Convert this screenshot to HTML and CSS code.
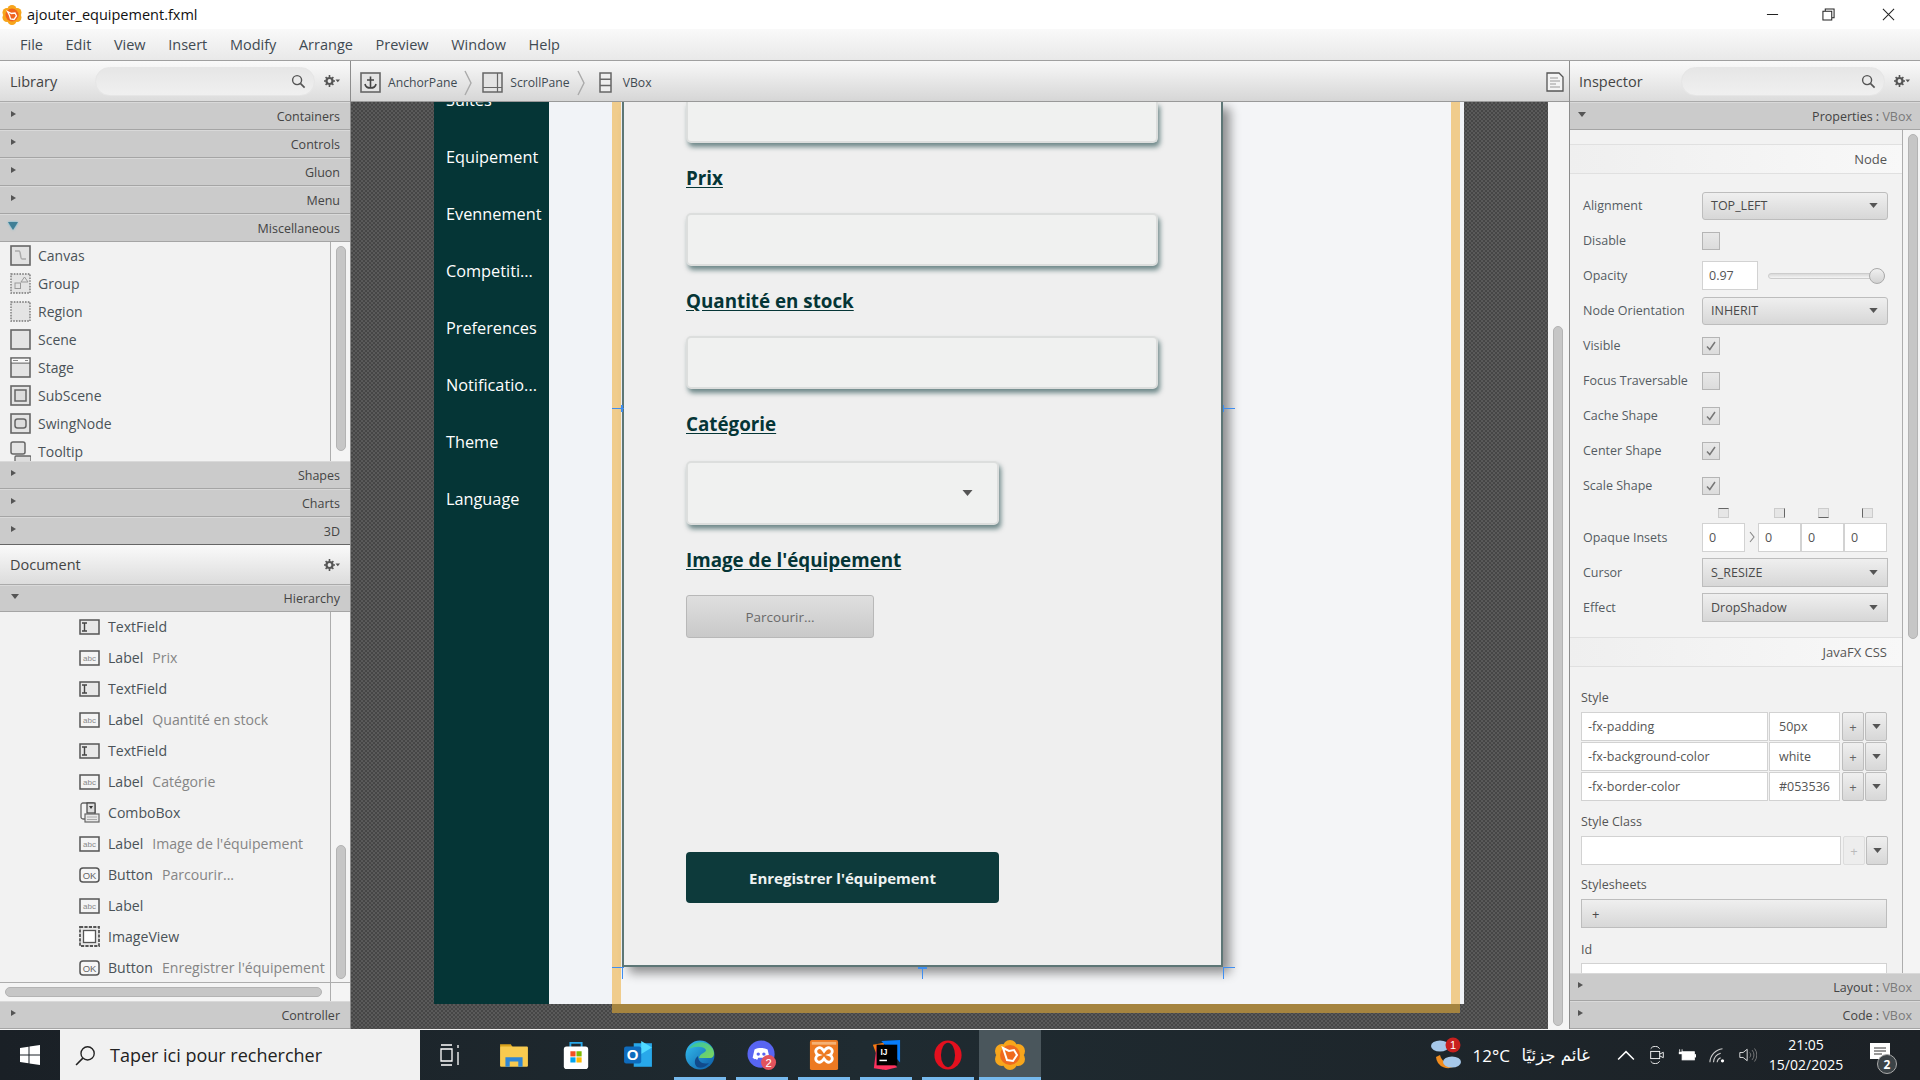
FILE: index.html
```html
<!DOCTYPE html>
<html lang="fr">
<head>
<meta charset="utf-8">
<title>ajouter_equipement.fxml</title>
<link rel="stylesheet" href="styles.css">
</head>
<body>
<svg class="sprite" aria-hidden="true">
  <symbol id="search" viewBox="0 0 16 16"><circle cx="6.5" cy="6.5" r="4.8" fill="none" stroke="#555" stroke-width="1.5"/><path d="M10 10l4.5 4.5" stroke="#555" stroke-width="1.8"/></symbol>
  <symbol id="gear" viewBox="0 0 16 12"><circle cx="5.5" cy="6" r="3" fill="none" stroke="#555" stroke-width="2.2"/><path d="M5.5 0v2M5.5 10v2M0 6h2M9 6h2M1.6 2.1l1.4 1.4M8 8.5l1.4 1.4M9.4 2.1L8 3.5M3 8.5L1.6 9.9" stroke="#555" stroke-width="1.6"/><path d="M11.5 4.5h4.5l-2.2 2.8z" fill="#555"/></symbol>
  <symbol id="i-canvas" viewBox="0 0 21 21"><rect x="1" y="1" width="19" height="19" fill="#e2e2e2" stroke="#666" stroke-width="1.6"/><path d="M5 6h4c2 0 1 8 3 8h4" fill="none" stroke="#aaa" stroke-width="1.5"/></symbol>
  <symbol id="i-group" viewBox="0 0 21 21"><rect x="1" y="1" width="19" height="19" fill="#e4e4e4" stroke="#777" stroke-width="1.4" stroke-dasharray="1.6 1.2"/><rect x="5" y="10" width="5.5" height="5.5" fill="none" stroke="#999"/><path d="M11 9l3.5-5 3.500 5z" fill="none" stroke="#999"/></symbol>
  <symbol id="i-region" viewBox="0 0 21 21"><rect x="1" y="1" width="19" height="19" fill="#e4e4e4" stroke="#777" stroke-width="1.4" stroke-dasharray="1.600 1.200"/></symbol>
  <symbol id="i-scene" viewBox="0 0 21 21"><rect x="1" y="1" width="19" height="19" fill="#e4e4e4" stroke="#666" stroke-width="1.6"/></symbol>
  <symbol id="i-anchor" viewBox="0 0 21 21"><rect x="1" y="1" width="19" height="19" fill="#e4e4e4" stroke="#666" stroke-width="1.6"/><path d="M10.500 4.500v11.500M7 8h7M5 12c.5 3 3 4 5.500 4s5-1 5.500-4" fill="none" stroke="#444" stroke-width="1.600"/></symbol>
  <symbol id="i-stage" viewBox="0 0 21 21"><rect x="1" y="1" width="19" height="19" fill="#e4e4e4" stroke="#666" stroke-width="1.6"/><path d="M1 6h19" stroke="#666" stroke-width="1.300"/><rect x="1.800" y="1.800" width="17.400" height="3.600" fill="#fafafa"/><path d="M3 3.500h5M15 3.500h3" stroke="#888"/></symbol>
  <symbol id="i-subscene" viewBox="0 0 21 21"><rect x="1" y="1" width="19" height="19" fill="#e4e4e4" stroke="#666" stroke-width="1.6"/><rect x="5" y="5" width="11" height="11" fill="#ddd" stroke="#666" stroke-width="1.500"/></symbol>
  <symbol id="i-swing" viewBox="0 0 21 21"><rect x="1" y="1" width="19" height="19" fill="#e4e4e4" stroke="#666" stroke-width="1.6"/><rect x="5" y="6" width="11" height="9" rx="2.500" fill="#ddd" stroke="#666" stroke-width="1.500"/></symbol>
  <symbol id="i-tooltip" viewBox="0 0 21 21"><rect x="1" y="1" width="14" height="12" rx="2" fill="#e4e4e4" stroke="#666" stroke-width="1.500"/><rect x="5" y="15" width="16" height="8" rx="1" fill="#ddd" stroke="#666" stroke-width="1.300"/></symbol>
  <symbol id="i-text" viewBox="0 0 21 16"><rect x="1" y="1" width="19" height="14" fill="#e8e8e8" stroke="#555" stroke-width="1.500"/><path d="M3 4h5M3 12h5M5.500 4v8" stroke="#444" stroke-width="1.400"/></symbol>
  <symbol id="i-combo" viewBox="0 0 21 21"><rect x="2" y="1" width="14" height="16" rx="2" fill="#f4f4f4" stroke="#666" stroke-width="1.300"/><rect x="8" y="1" width="8" height="10" fill="#ddd" stroke="#444" stroke-width="1.200"/><path d="M10 4h4l-2 3z" fill="#333"/><rect x="6" y="12" width="14" height="8" fill="#e8e8e8" stroke="#666" stroke-width="1.200"/><path d="M8 15h10M8 17.500h10" stroke="#aaa"/></symbol>
  <symbol id="i-image" viewBox="0 0 21 21"><rect x="1" y="1" width="19" height="19" fill="#e8e8e8" stroke="#555" stroke-width="1.800" stroke-dasharray="3.200 1.200"/><rect x="4.500" y="4.500" width="12" height="12" fill="#fff" stroke="#555" stroke-width="1.300"/></symbol>
  <symbol id="caret" viewBox="0 0 10 6"><path d="M0 0h10L5 6z" fill="#555"/></symbol>
  <symbol id="check" viewBox="0 0 12 12"><path d="M2 6.500l2.800 3L10 2" fill="none" stroke="#777" stroke-width="1.500"/></symbol>
</svg>

<header class="titlebar">
  <svg class="app-logo" viewBox="0 0 20 20"><g fill="#f7a51c"><circle cx="10" cy="4.500" r="4.500"/><circle cx="10" cy="15.500" r="4.500"/><circle cx="5" cy="7.500" r="4.500"/><circle cx="15" cy="7.500" r="4.500"/><circle cx="5" cy="12.500" r="4.500"/><circle cx="15" cy="12.500" r="4.500"/></g><circle cx="10" cy="10" r="6.500" fill="#f0631f"/><path d="M5.500 6.500l4 2 3.500-.5 1.500 3-2.500 3.500-3.500-.5-1-3.500z" fill="none" stroke="#fff" stroke-width="1.300"/></svg>
  <span class="title-text">ajouter_equipement.fxml</span>
  <div class="win-controls">
    <svg viewBox="0 0 14 14"><path d="M1 7h12" stroke="#222" stroke-width="1.100"/></svg>
    <svg class="win-restore" viewBox="0 0 14 14"><path d="M3.500 3.500V1h9.500v9.500h-2.500M1 3.500h9.500V13H1z" fill="none" stroke="#222" stroke-width="1.100"/></svg>
    <svg viewBox="0 0 14 14"><path d="M1 1l12 12M13 1L1 13" stroke="#222" stroke-width="1.100"/></svg>
  </div>
</header>

<nav class="menubar">
  <span>File</span><span>Edit</span><span>View</span><span>Insert</span><span>Modify</span><span>Arrange</span><span>Preview</span><span>Window</span><span>Help</span>
</nav>

<div class="workarea">
  <aside class="left-panel">
    <div class="panel-head">
      <span class="panel-title">Library</span>
      <div class="searchbox lib-search"><svg class="search-ic"><use href="#search"/></svg></div>
      <svg class="gear"><use href="#gear"/></svg>
    </div>
    <div class="sec"><i class="tri"></i><span>Containers</span></div>
    <div class="sec"><i class="tri"></i><span>Controls</span></div>
    <div class="sec"><i class="tri"></i><span>Gluon</span></div>
    <div class="sec"><i class="tri"></i><span>Menu</span></div>
    <div class="sec"><i class="tri-down blue"></i><span>Miscellaneous</span></div>
    <div class="lib-list">
      <ul class="lib-items">
        <li><svg class="ic21"><use href="#i-canvas"/></svg>Canvas</li>
        <li><svg class="ic21"><use href="#i-group"/></svg>Group</li>
        <li><svg class="ic21"><use href="#i-region"/></svg>Region</li>
        <li><svg class="ic21"><use href="#i-scene"/></svg>Scene</li>
        <li><svg class="ic21"><use href="#i-stage"/></svg>Stage</li>
        <li><svg class="ic21"><use href="#i-subscene"/></svg>SubScene</li>
        <li><svg class="ic21"><use href="#i-swing"/></svg>SwingNode</li>
        <li><svg class="ic21"><use href="#i-tooltip"/></svg>Tooltip</li>
      </ul>
      <div class="vscroll"><div class="thumb lib-thumb"></div></div>
    </div>
    <div class="sec"><i class="tri"></i><span>Shapes</span></div>
    <div class="sec"><i class="tri"></i><span>Charts</span></div>
    <div class="sec sec-dark"><i class="tri"></i><span>3D</span></div>
    <div class="panel-head doc-head">
      <span class="panel-title">Document</span>
      <svg class="gear"><use href="#gear"/></svg>
    </div>
    <div class="sec sec-hier"><i class="tri-down"></i><span>Hierarchy</span></div>
    <div class="hier">
      <ul class="hier-items">
        <li><svg class="ic-h"><use href="#i-text"/></svg>TextField</li>
        <li><svg class="ic-h" viewBox="0 0 21 16"><rect x="1" y="1" width="19" height="14" fill="#f4f4f4" stroke="#555" stroke-width="1.500"/><text x="10.500" y="11" font-size="8" font-family="Liberation Sans" fill="#888" text-anchor="middle">abc</text></svg>Label<em>Prix</em></li>
        <li><svg class="ic-h"><use href="#i-text"/></svg>TextField</li>
        <li><svg class="ic-h" viewBox="0 0 21 16"><rect x="1" y="1" width="19" height="14" fill="#f4f4f4" stroke="#555" stroke-width="1.500"/><text x="10.500" y="11" font-size="8" font-family="Liberation Sans" fill="#888" text-anchor="middle">abc</text></svg>Label<em>Quantité en stock</em></li>
        <li><svg class="ic-h"><use href="#i-text"/></svg>TextField</li>
        <li><svg class="ic-h" viewBox="0 0 21 16"><rect x="1" y="1" width="19" height="14" fill="#f4f4f4" stroke="#555" stroke-width="1.500"/><text x="10.500" y="11" font-size="8" font-family="Liberation Sans" fill="#888" text-anchor="middle">abc</text></svg>Label<em>Catégorie</em></li>
        <li><svg class="ic-h tall"><use href="#i-combo"/></svg>ComboBox</li>
        <li><svg class="ic-h" viewBox="0 0 21 16"><rect x="1" y="1" width="19" height="14" fill="#f4f4f4" stroke="#555" stroke-width="1.500"/><text x="10.500" y="11" font-size="8" font-family="Liberation Sans" fill="#888" text-anchor="middle">abc</text></svg>Label<em>Image de l'équipement</em></li>
        <li><svg class="ic-h" viewBox="0 0 21 16"><rect x="1" y="1" width="19" height="14" rx="3" fill="#f6f6f6" stroke="#555" stroke-width="1.500"/><text x="10.500" y="11.500" font-size="9.500" font-family="Liberation Sans" fill="#666" text-anchor="middle">OK</text></svg>Button<em>Parcourir...</em></li>
        <li><svg class="ic-h" viewBox="0 0 21 16"><rect x="1" y="1" width="19" height="14" fill="#f4f4f4" stroke="#555" stroke-width="1.500"/><text x="10.500" y="11" font-size="8" font-family="Liberation Sans" fill="#888" text-anchor="middle">abc</text></svg>Label</li>
        <li><svg class="ic-h tall"><use href="#i-image"/></svg>ImageView</li>
        <li><svg class="ic-h" viewBox="0 0 21 16"><rect x="1" y="1" width="19" height="14" rx="3" fill="#f6f6f6" stroke="#555" stroke-width="1.500"/><text x="10.500" y="11.500" font-size="9.500" font-family="Liberation Sans" fill="#666" text-anchor="middle">OK</text></svg>Button<em>Enregistrer l'équipement</em></li>
      </ul>
      <div class="vscroll"><div class="thumb hier-thumb"></div></div>
    </div>
    <div class="hscroll"><div class="hthumb"></div><div class="hcorner"></div></div>
    <div class="sec"><i class="tri"></i><span>Controller</span></div>
  </aside>

  <main class="center">
    <div class="crumbs">
      <svg class="ic21"><use href="#i-anchor"/></svg>
      <span class="crumb-text">AnchorPane</span>
      <svg class="chev" viewBox="0 0 8 26"><path d="M1 1l6 12-6 12" fill="none" stroke="#aaa" stroke-width="1.400"/></svg>
      <svg class="ic21" viewBox="0 0 21 21"><rect x="1" y="1" width="19" height="19" fill="#e4e4e4" stroke="#666" stroke-width="1.500"/><path d="M15.500 1v19M1 15.500h19" stroke="#666" stroke-width="1.200"/></svg>
      <span class="crumb-text">ScrollPane</span>
      <svg class="chev" viewBox="0 0 8 26"><path d="M1 1l6 12-6 12" fill="none" stroke="#aaa" stroke-width="1.400"/></svg>
      <svg class="vbox-ic" viewBox="0 0 13 21"><rect x="1" y="1" width="11" height="19" fill="#eee" stroke="#666" stroke-width="1.500"/><path d="M1 7.300h11M1 13.600h11" stroke="#666" stroke-width="1.500"/></svg>
      <span class="crumb-text">VBox</span>
      <svg class="doc-ic" viewBox="0 0 18 20"><path d="M1 1h12l4 4v14H1z" fill="#f4f4f4" stroke="#555" stroke-width="1.300"/><path d="M4 6h8M4 9h10M4 12h6M4 15h10" stroke="#999" stroke-width="1.200"/></svg>
    </div>
    <div class="stage-wrap">
      <div class="canvas">
        <div class="scene-row">
          <div class="sidebar">
            <span class="side-first">Suites</span>
            <span>Equipement</span>
            <span>Evennement</span>
            <span>Competiti...</span>
            <span>Preferences</span>
            <span>Notificatio...</span>
            <span>Theme</span>
            <span>Language</span>
          </div>
          <div class="scene-main">
            <div class="beige">
              <div class="beige-inner">
                <section class="card">
                  <div class="field field-top"></div>
                  <h3 class="flabel">Prix</h3>
                  <div class="field"></div>
                  <h3 class="flabel">Quantité en stock</h3>
                  <div class="field"></div>
                  <h3 class="flabel flabel-combo">Catégorie</h3>
                  <div class="combo"><svg class="combo-caret"><use href="#caret"/></svg></div>
                  <h3 class="flabel">Image de l'équipement</h3>
                  <div class="browse">Parcourir...</div>
                  <div class="save">Enregistrer l'équipement</div>
                  <i class="hd hd-l"></i><i class="hd hd-r"></i><i class="hd hd-b"></i><i class="hd hd-bl"></i><i class="hd hd-br"></i>
                </section>
              </div>
              <div class="beige-foot"></div>
            </div>
          </div>
        </div>
      </div>
      <div class="center-scroll"><div class="thumb center-thumb"></div></div>
    </div>
  </main>

  <aside class="right-panel">
    <div class="panel-head insp-head">
      <span class="panel-title">Inspector</span>
      <div class="searchbox ins-search"><svg class="search-ic"><use href="#search"/></svg></div>
      <svg class="gear"><use href="#gear"/></svg>
    </div>
    <div class="sec sec-r"><i class="tri-down"></i><span>Properties : <b>VBox</b></span></div>
    <div class="insp-body">
      <div class="insp-content">
        <div class="subhead first">Node</div>
        <div class="row"><label>Alignment</label><div class="ctl drop">TOP_LEFT<svg class="dcaret"><use href="#caret"/></svg></div></div>
        <div class="row"><label>Disable</label><div class="cb"></div></div>
        <div class="row"><label>Opacity</label><div class="inp op-inp">0.97</div><div class="slider"><i></i></div></div>
        <div class="row"><label>Node Orientation</label><div class="ctl drop">INHERIT<svg class="dcaret"><use href="#caret"/></svg></div></div>
        <div class="row"><label>Visible</label><div class="cb"><svg><use href="#check"/></svg></div></div>
        <div class="row"><label>Focus Traversable</label><div class="cb"></div></div>
        <div class="row"><label>Cache Shape</label><div class="cb"><svg><use href="#check"/></svg></div></div>
        <div class="row"><label>Center Shape</label><div class="cb"><svg><use href="#check"/></svg></div></div>
        <div class="row"><label>Scale Shape</label><div class="cb"><svg><use href="#check"/></svg></div></div>
        <div class="inset-icons">
          <i class="ii ii-t"></i><i class="ii ii-r"></i><i class="ii ii-b"></i><i class="ii ii-l"></i>
        </div>
        <div class="row row-insets"><label>Opaque Insets</label>
          <div class="inp in-a">0</div>
          <svg class="in-chev" viewBox="0 0 6 12"><path d="M1 1l4 5-4 5" fill="none" stroke="#888" stroke-width="1.100"/></svg>
          <div class="inp in-b">0</div><div class="inp in-b">0</div><div class="inp in-b">0</div>
        </div>
        <div class="row"><label>Cursor</label><div class="ctl drop tall-ctl">S_RESIZE<svg class="dcaret"><use href="#caret"/></svg></div></div>
        <div class="row"><label>Effect</label><div class="ctl drop tall-ctl">DropShadow<svg class="dcaret"><use href="#caret"/></svg></div></div>
        <div class="subhead css">JavaFX CSS</div>
        <div class="stack-label style-lab">Style</div>
        <div class="style-row"><div class="inp st-k">-fx-padding</div><div class="inp st-v">50px</div><div class="ctl mini">+</div><div class="ctl mini"><svg class="mcaret"><use href="#caret"/></svg></div></div>
        <div class="style-row"><div class="inp st-k">-fx-background-color</div><div class="inp st-v">white</div><div class="ctl mini">+</div><div class="ctl mini"><svg class="mcaret"><use href="#caret"/></svg></div></div>
        <div class="style-row"><div class="inp st-k">-fx-border-color</div><div class="inp st-v">#053536</div><div class="ctl mini">+</div><div class="ctl mini"><svg class="mcaret"><use href="#caret"/></svg></div></div>
        <div class="stack-label">Style Class</div>
        <div class="style-row"><div class="inp st-wide"></div><div class="ctl mini off">+</div><div class="ctl mini"><svg class="mcaret"><use href="#caret"/></svg></div></div>
        <div class="stack-label lab-sheets">Stylesheets</div>
        <div class="ctl sheet">+</div>
        <div class="stack-label lab-id">Id</div>
        <div class="inp id-inp"></div>
      </div>
      <div class="vscroll insp-scroll"><div class="thumb insp-thumb"></div></div>
    </div>
    <div class="sec sec-r"><i class="tri"></i><span>Layout : <b>VBox</b></span></div>
    <div class="sec sec-r"><i class="tri"></i><span>Code : <b>VBox</b></span></div>
  </aside>
</div>

<footer class="taskbar">
  <div class="start"><svg viewBox="0 0 20 20"><path d="M0 3l8.500-1.200v7.700H0zM9.500 1.600L20 0v9.500H9.500zM0 10.500h8.500v7.700L0 17zM9.500 10.500H20V20L9.500 18.400z" fill="#fff"/></svg></div>
  <div class="task-search">
    <svg viewBox="0 0 20 20"><circle cx="12" cy="8" r="6.300" fill="none" stroke="#222" stroke-width="1.300"/><path d="M7.500 12.500L1 19" stroke="#222" stroke-width="1.500"/></svg>
    <span>Taper ici pour rechercher</span>
  </div>
  <div class="tb tb-view"><svg viewBox="0 0 20 24"><path d="M1 2h11M1 22h11M1 6h11v12H1zM18 2v3M18 9v13" fill="none" stroke="#fff" stroke-width="1.300"/></svg></div>
  <div class="tb"><svg viewBox="0 0 28 28"><path d="M1 4h10l2 3H1z" fill="#d9a21c"/><rect x="1" y="6" width="26" height="19" rx="1" fill="#f8ca4f"/><path d="M6 25v-9h16v9h-4v-5h-8v5z" fill="#2f86d6"/></svg></div>
  <div class="tb"><svg viewBox="0 0 28 32"><path d="M8 8V3h12v5" fill="none" stroke="#28a8ea" stroke-width="2"/><rect x="1" y="7" width="26" height="24" rx="3" fill="#fff"/><rect x="8" y="12" width="5.500" height="5.500" fill="#f25022"/><rect x="14.500" y="12" width="5.500" height="5.500" fill="#7fba00"/><rect x="8" y="18.500" width="5.500" height="5.500" fill="#00a4ef"/><rect x="14.500" y="18.500" width="5.500" height="5.500" fill="#ffb900"/></svg></div>
  <div class="tb"><svg viewBox="0 0 28 28"><path d="M10 3l17 0v22H10z" fill="#28a8ea"/><path d="M17 1l10 6-10 6z" fill="#50d9ff"/><rect x="1" y="6" width="16" height="16" rx="2" fill="#0f6cbd"/><text x="9" y="19" font-size="14" font-family="Liberation Sans" font-weight="700" fill="#fff" text-anchor="middle">O</text></svg></div>
  <div class="tb on"><svg viewBox="0 0 30 30"><defs><linearGradient id="edge" x1="0" y1="0" x2="1" y2="1"><stop offset="0" stop-color="#35c1f1"/><stop offset="1" stop-color="#0c59a4"/></linearGradient><linearGradient id="edge2" x1="0" y1="0" x2="1" y2="1"><stop offset="0" stop-color="#31c4a8"/><stop offset="1" stop-color="#7fd65a"/></linearGradient></defs><circle cx="15" cy="15" r="14.500" fill="url(#edge)"/><path d="M4 9C8 1 22-1 28 9c2 5 1 9-3 9H14c1-5 7-5 7-8-2-4-11-4-17-1z" fill="url(#edge2)"/><path d="M13 16c0 5 4 9 11 7-3 4-8 6-12 4-3-3-3-8 1-11z" fill="#114a8b"/></svg></div>
  <div class="tb on"><svg viewBox="0 0 32 32"><circle cx="15" cy="15" r="14.500" fill="#5865f2"/><path d="M8 10c4-2 10-2 14 0l2 9c-2 2-4 2-5 2l-1-2h-6l-1 2c-1 0-3 0-5-2z" fill="#fff"/><circle cx="12" cy="15" r="1.800" fill="#5865f2"/><circle cx="18" cy="15" r="1.800" fill="#5865f2"/><circle cx="23" cy="24" r="8" fill="#e2535c"/><text x="23" y="28.500" font-size="12" font-family="Liberation Sans" fill="#fff" text-anchor="middle">2</text></svg></div>
  <div class="tb on"><svg viewBox="0 0 30 32"><rect x="0" y="0" width="30" height="32" rx="2" fill="#ed7a22"/><rect x="2" y="2" width="26" height="3" fill="#f6b173"/><path d="M8 9c3-2 5 0 7 3 2-3 4-5 7-3s2 6-1 7c3 1 4 5 1 7s-5 0-7-3c-2 3-4 5-7 3s-2-6 1-7c-3-1-4-5-1-7z" fill="none" stroke="#fff" stroke-width="3"/></svg></div>
  <div class="tb on"><svg viewBox="0 0 30 32"><path d="M1 5l12-2-2 29z" fill="#f97a12"/><path d="M10 1l20-1v24z" fill="#087cfa"/><path d="M2 30l3-24 22 23-12 3z" fill="#fe315d"/><rect x="5" y="5" width="22" height="22" fill="#000"/><text x="9" y="16" font-size="9" font-family="Liberation Sans" font-weight="700" fill="#fff">IJ</text><rect x="8" y="21" width="8" height="1.600" fill="#fff"/></svg></div>
  <div class="tb on"><svg viewBox="0 0 30 32"><ellipse cx="15" cy="16" rx="14.500" ry="15.500" fill="#e3101e"/><ellipse cx="15" cy="16" rx="7.500" ry="13" fill="#1c262c"/></svg></div>
  <div class="tb on active"><svg viewBox="0 0 30 30"><g fill="#f8a61c"><circle cx="15" cy="7" r="7"/><circle cx="15" cy="23" r="7"/><circle cx="7" cy="11" r="7"/><circle cx="23" cy="11" r="7"/><circle cx="7" cy="19" r="7"/><circle cx="23" cy="19" r="7"/></g><circle cx="15" cy="15" r="10" fill="#ef6a1f"/><path d="M8 8l6 3 5-1 3 5-4 6-6-1-2-6z" fill="none" stroke="#fff" stroke-width="2"/></svg></div>
  <div class="tray">
    <svg class="weather" viewBox="0 0 32 36"><path d="M6 20a12 12 0 0 0 20 8c-6 1-14-2-16-10z" fill="#f08c1e"/><ellipse cx="10" cy="9" rx="9" ry="5.500" fill="#a6c8ea"/><ellipse cx="22" cy="25" rx="9" ry="5.500" fill="#a6c8ea"/><circle cx="23" cy="8" r="7.500" fill="#c8201e"/><text x="23" y="12" font-size="11" font-family="Liberation Sans" fill="#fff" text-anchor="middle">1</text></svg>
    <span class="temp">12°C</span>
    <span class="cond" dir="rtl">غائم جزئيًا</span>
    <svg class="tr-ic chevup" viewBox="0 0 16 10"><path d="M1 9l7-7 7 7" fill="none" stroke="#fff" stroke-width="1.300"/></svg>
    <svg class="tr-ic" viewBox="0 0 16 20"><path d="M1 3a6 6 0 0 1 10 0M1 17a6 6 0 0 0 10 0" fill="none" stroke="#fff"/><rect x="1" y="6" width="10" height="8" fill="none" stroke="#fff"/><path d="M11 9l4-2v6l-4-2" fill="none" stroke="#fff"/></svg>
    <svg class="tr-ic" viewBox="0 0 22 16"><path d="M2 1v3M5 1v3" stroke="#fff"/><rect x="1" y="4" width="5" height="3" fill="#fff"/><rect x="5" y="4" width="15" height="10" fill="#fff" stroke="#fff"/><rect x="20" y="7" width="2" height="4" fill="#fff"/></svg>
    <svg class="tr-ic" viewBox="0 0 20 18"><path d="M1 17a16 16 0 0 1 14-15M5 17a11 11 0 0 1 8-10M9 17a6 6 0 0 1 4-5" fill="none" stroke="#ccc" stroke-width="1.200"/><circle cx="15" cy="15.500" r="1.800" fill="#fff"/></svg>
    <svg class="tr-ic" viewBox="0 0 22 18"><path d="M1 6h4l5-4v14l-5-4H1z" fill="none" stroke="#fff"/><path d="M13 6a4 4 0 0 1 0 6M16 3a9 9 0 0 1 0 12M19 1a13 13 0 0 1 0 16" fill="none" stroke="#888"/></svg>
    <div class="clock"><span>21:05</span><span>15/02/2025</span></div>
    <div class="notif"><svg viewBox="0 0 20 20"><path d="M0 0h20v16H0z" fill="#fff"/><path d="M4 5h12M4 8h12M4 11h8" stroke="#333"/></svg><span class="notif-badge">2</span></div>
  </div>
</footer>
</body>
</html>
```

FILE: styles.css
```css
* { box-sizing: border-box; }
html, body { margin: 0; padding: 0; }
body {
  width: 1920px;
  height: 1080px;
  overflow: hidden;
  display: flex;
  flex-direction: column;
  font-family: "Open Sans", "DejaVu Sans", sans-serif;
  font-size: 13px;
  color: #4a4a4a;
  background: #f2f2f2;
}
.sprite { display: block; width: 0; height: 0; overflow: hidden; }
ul { list-style: none; margin: 0; padding: 0; }

/* window chrome */
.titlebar { height: 29px; background: #fff; display: flex; align-items: center; flex: none; }
.app-logo { width: 20px; height: 20px; margin-left: 2px; }
.title-text { margin-left: 5px; font-size: 14.5px; color: #111; }
.win-controls { margin-left: auto; display: flex; gap: 45px; padding-right: 25px; }
.win-controls svg { width: 13px; height: 13px; }
.win-controls .win-restore { margin-left: -2px; margin-right: 2px; }

.menubar {
  height: 32px; flex: none;
  display: flex; align-items: center; gap: 22.600px;
  padding-left: 20px;
  background: linear-gradient(#f9f9f9, #e9e9e9);
  border-bottom: 1px solid #a0a0a0;
  font-size: 14.500px; color: #3f4a52;
}

.workarea { flex: none; height: 968px; display: flex; }

/* side panels */
.left-panel { width: 351px; flex: none; display: flex; flex-direction: column; background: #f2f2f2; border-right: 1px solid #8c8c8c; }
.right-panel { width: 351px; flex: none; display: flex; flex-direction: column; background: #f2f2f2; border-left: 1px solid #8c8c8c; }

.panel-head {
  height: 41px; flex: none;
  display: flex; align-items: center;
  padding-left: 10px;
  background: linear-gradient(#fafafa, #dcdcdc);
  border-bottom: 1px solid #aaa;
}
.panel-title { font-size: 14.500px; color: #444; }
.doc-head { height: 40px; }
.doc-head .gear { margin-left: auto; }
.searchbox {
  height: 29px; border: 1px solid #e6e6e6; border-radius: 15px;
  background: linear-gradient(#e6e6e6, #f0f0f0);
  display: flex; align-items: center; justify-content: flex-end; padding-right: 8px;
}
.lib-search { width: 220px; margin-left: 38px; }
.ins-search { width: 206px; margin-left: 38px; }
.search-ic { width: 15px; height: 15px; }
.gear { width: 16px; height: 12px; margin-left: 9px; margin-right: 10px; flex: none; }

.sec {
  height: 28px; flex: none;
  display: flex; align-items: center; justify-content: space-between;
  padding: 0 10px 0 11px;
  background: #cbcbcb;
  border-top: 1px solid #d9d9d9;
  border-bottom: 1px solid #a5a5a5;
  font-size: 12.500px; color: #444;
}
.sec b { font-weight: 400; color: #7a7a7a; }
.sec-dark { border-bottom-color: #666; }
.sec-hier { height: 27px; }
.sec-r { padding: 0 8px 0 8px; }
.tri { width: 0; height: 0; border-left: 5px solid #555; border-top: 3.500px solid transparent; border-bottom: 3.500px solid transparent; margin-top: -4px; }
.tri-down { width: 0; height: 0; border-top: 5px solid #555; border-left: 4px solid transparent; border-right: 4px solid transparent; margin-top: -4px; }
.tri-down.blue { border-top: 8px solid #3f7f96; border-left-width: 5px; border-right-width: 5px; margin-left: -3px; filter: drop-shadow(0 0 1px #5bb8d8); }

.lib-list { height: 219px; flex: none; display: flex; overflow: hidden; }
.lib-items { flex: 1; margin-top: -1px; }
.lib-items li { height: 28px; display: flex; align-items: center; padding-left: 10px; font-size: 14px; color: #4a5258; }
.ic21 { width: 21px; height: 21px; flex: none; overflow: visible; }
.lib-items .ic21 { margin-right: 7px; }

.vscroll { width: 20px; flex: none; border-left: 1px solid #adadad; background: #f4f4f4; padding: 4px 4px 0 5px; }
.thumb { width: 10px; background: #c6c6c6; border: 1px solid #b3b3b3; border-radius: 6px; }
.lib-thumb { height: 205px; }
.hier-thumb { height: 134px; margin-top: 229px; }

.hier { height: 370px; flex: none; display: flex; overflow: hidden; }
.hier-items { flex: 1; overflow: hidden; }
.hier-items li { height: 31px; display: flex; align-items: center; padding-left: 79px; font-size: 14.100px; color: #4a5258; white-space: nowrap; }
.hier-items li:first-child { margin-top: -1px; }
.hier-items em { font-style: normal; color: #858585; margin-left: 9px; }
.ic-h { width: 21px; height: 16px; margin-right: 8px; flex: none; }
.ic-h.tall { height: 21px; }

.hscroll { height: 19px; flex: none; display: flex; align-items: center; padding-left: 5px; border-top: 1px solid #adadad; background: #f4f4f4; }
.hthumb { width: 317px; height: 10px; background: #c6c6c6; border: 1px solid #b3b3b3; border-radius: 6px; }
.hcorner { width: 1px; height: 19px; background: #adadad; margin-left: 8px; }

/* center */
.center { flex: 1; min-width: 0; display: flex; flex-direction: column; }
.crumbs {
  height: 41px; flex: none;
  display: flex; align-items: center;
  padding: 3px 5px 0 9px;
  background: linear-gradient(#f8f8f8, #d6d6d6);
  border-bottom: 1px solid #999;
  font-size: 12.200px; color: #3f4a52;
}
.crumb-text { margin-left: 7px; }
.chev { width: 8px; height: 26px; margin: 0 10px 0 7px; }
.vbox-ic { width: 13px; height: 21px; margin-left: 4px; margin-right: 4px; }
.doc-ic { width: 18px; height: 20px; margin-left: auto; margin-top: -2px; }

.stage-wrap { flex: 1; min-height: 0; display: flex; overflow: hidden; }
.canvas {
  flex: 1; min-width: 0; padding-left: 83px;
  background: repeating-conic-gradient(#464646 0 25%, #5a5a5a 0 50%) 0 0 / 4px 4px;
}
.center-scroll { width: 21px; flex: none; background: #f4f4f4; padding-left: 5px; }
.center-thumb { height: 700px; margin-top: 224px; }

.scene-row { display: flex; width: 1030px; height: 902px; }
.sidebar {
  width: 115px; flex: none; background: #053536; overflow: hidden;
  display: flex; flex-direction: column; padding-left: 12px;
  color: #fff; font-size: 16.300px;
}
.sidebar span { height: 57px; flex: none; display: flex; align-items: center; white-space: nowrap; }
.sidebar .side-first { margin-top: -31px; }
.scene-main { flex: 1; background: #f1f3f7; padding-left: 63px; }
.beige { width: 848px; height: 911px; display: flex; flex-direction: column; }
.beige-inner {
  flex: 1; min-height: 0;
  background: #f4f5f7;
  border-left: 9px solid #f0cc8c;
  border-right: 9px solid #f0cc8c;
}
.beige-foot { height: 9px; flex: none; background: #a5843f; }
.card {
  position: relative;
  width: 601px; height: 865px;
  margin-left: 1px;
  background: #efefef;
  border: 2px solid #5d7676;
  border-top: 0;
  padding-left: 62px;
  box-shadow: 7px 6px 10px rgba(0,0,0,.42);
  display: flex; flex-direction: column;
}
.field {
  width: 472px; height: 53px; flex: none;
  background: #f0f1f0;
  border: 2px solid #dcdedd;
  border-radius: 5px;
  box-shadow: 2px 4px 5px rgba(5,53,54,.55);
}
.field-top { height: 41px; border-top: 0; border-radius: 0 0 5px 5px; }
.flabel {
  margin: 21px 0 21px; height: 28px; line-height: 28px;
  font-size: 18.800px; font-weight: 700; color: #053536;
  text-decoration: underline; text-underline-offset: 2px;
  white-space: nowrap;
}
.flabel-combo { margin-bottom: 23px; }
.combo {
  width: 313px; height: 64px; flex: none;
  background: #f0f1f0;
  border: 2px solid #dcdedd; border-radius: 5px;
  box-shadow: 2px 4px 5px rgba(5,53,54,.55);
  display: flex; align-items: center; justify-content: flex-end;
  padding-right: 24px;
}
.combo-caret { width: 11px; height: 6px; }
.browse {
  width: 188px; height: 43px; flex: none;
  background: linear-gradient(#dfdfdf, #c9c9c9);
  border: 1px solid #b8b8b8; border-radius: 3px;
  display: flex; align-items: center; justify-content: center;
  font-size: 13.500px; color: #6a6a6a;
}
.save {
  width: 313px; height: 51px; flex: none; margin-top: 214px;
  background: #0d3a3b; border-radius: 4px;
  display: flex; align-items: center; justify-content: center;
  font-size: 15px; font-weight: 700; color: #eef2f2;
}

/* selection handles */
.hd { position: absolute; display: block; }
.hd::before, .hd::after { content: ""; position: absolute; background: #3f8ef0; }
.hd-l { left: -12px; top: 306px; width: 12px; height: 1px; }
.hd-l::before { left: 0; top: 0; width: 12px; height: 1px; }
.hd-l::after { left: 9px; top: -3px; width: 2px; height: 7px; }
.hd-r { right: -14px; top: 306px; width: 12px; height: 1px; }
.hd-r::before { left: 0; top: 0; width: 12px; height: 1px; }
.hd-r::after { left: 0; top: -3px; width: 1px; height: 7px; }
.hd-b { left: 298px; bottom: -14px; width: 1px; height: 12px; }
.hd-b::before { left: 0; top: 0; width: 1px; height: 12px; }
.hd-b::after { left: -4px; top: 0; width: 9px; height: 2px; }
.hd-bl { left: -12px; bottom: -14px; width: 12px; height: 12px; }
.hd-bl::before { left: 0; top: 0; width: 12px; height: 1px; }
.hd-bl::after { right: 1px; top: 0; width: 1px; height: 12px; }
.hd-br { right: -14px; bottom: -14px; width: 12px; height: 12px; }
.hd-br::before { left: 0; top: 0; width: 12px; height: 1px; }
.hd-br::after { left: 0; top: 0; width: 1px; height: 12px; }

/* inspector */
.insp-head { padding-left: 9px; }
.insp-body { flex: 1; min-height: 0; display: flex; overflow: hidden; }
.insp-content { flex: 1; min-width: 0; padding-top: 14px; overflow: hidden; }
.insp-scroll { width: 18px; padding: 4px 3px 0 5px; }
.insp-thumb { height: 505px; }
.subhead {
  height: 30px; display: flex; align-items: center; justify-content: flex-end;
  padding-right: 15px;
  background: linear-gradient(90deg, #efefef, #f8f8f8);
  border-top: 1px solid #e0e0e0; border-bottom: 1px solid #e0e0e0;
  font-size: 13px; color: #555;
}
.subhead.first { margin-bottom: 14px; }
.subhead.css { margin-top: 12px; margin-bottom: 22px; }
.row { height: 35px; display: flex; align-items: center; padding-left: 13px; }
.row label { width: 119px; flex: none; font-size: 12.500px; color: #555c62; white-space: nowrap; }
.ctl {
  background: linear-gradient(#efefef, #d7d7d7);
  border: 1px solid #bdbdbd; border-radius: 3px;
  display: flex; align-items: center;
  color: #4a4a4a;
}
.drop { width: 186px; height: 28px; padding-left: 8px; font-size: 12.500px; position: relative; }
.tall-ctl { height: 29px; border-radius: 0; }
.dcaret { width: 9px; height: 5px; margin-left: auto; margin-right: 9px; }
.cb {
  width: 18px; height: 18px;
  background: linear-gradient(#e8e8e8, #dcdcdc);
  border: 1px solid #b5b5b5;
  display: flex; align-items: center; justify-content: center;
}
.cb svg { width: 12px; height: 12px; }
.inp {
  background: #fff; border: 1px solid #d2d2d2;
  display: flex; align-items: center; padding-left: 6px;
  font-size: 12.500px; color: #555;
  height: 29px; flex: none;
}
.op-inp { width: 56px; }
.slider { width: 117px; margin-left: 10px; height: 6px; background: linear-gradient(#d9d9d9, #f4f4f4); border: 1px solid #ccc; border-radius: 4px; position: relative; }
.slider i { position: absolute; right: -1px; top: -6px; width: 16px; height: 16px; border-radius: 50%; background: linear-gradient(#f0f0f0, #d2d2d2); border: 1px solid #aaa; }
.inset-icons { height: 20px; padding-left: 132px; display: flex; align-items: flex-end; padding-bottom: 5px; }
.ii { width: 11px; height: 10px; background: #e6e6e6; border: 1px solid #ccc; flex: none; }
.ii-t { border-top-color: #666; margin-left: 16px; }
.ii-r { border-right-color: #666; margin-left: 45px; }
.ii-b { border-bottom-color: #666; margin-left: 33px; }
.ii-l { border-left-color: #666; margin-left: 33px; }
.row-insets { height: 28px; margin-bottom: 4px; }
.in-a { width: 43px; }
.in-chev { width: 6px; height: 12px; margin: 0 3px 0 4px; }
.in-b { width: 43px; margin-right: 0; }
.stack-label { height: 18px; line-height: 18px; padding-left: 11px; margin: 12px 0 5px; font-size: 12.500px; color: #555; }
.style-lab { margin-top: 0; margin-bottom: 5px; }
.lab-sheets { margin: 11px 0 5px; }
.lab-id { margin: 13px 0 4px; }
.style-row { display: flex; height: 29px; margin-bottom: 1px; padding-left: 11px; gap: 1px; }
.st-k { width: 187px; height: 29px; }
.st-v { width: 71px; height: 29px; padding-left: 9px; margin-right: 1px; }
.st-wide { width: 260px; height: 29px; margin-right: 1px; }
.mini { width: 22px; height: 29px; justify-content: center; border-radius: 2px; font-size: 13px; color: #666; }
.mini.off { background: #ededed; color: #bbb; border-color: #ddd; }
.mcaret { width: 9px; height: 5px; }
.sheet { width: 306px; margin-left: 11px; height: 29px; padding-left: 10px; border-radius: 0; }
.id-inp { width: 306px; margin-left: 11px; }

/* taskbar */
.taskbar {
  height: 51px; flex: none;
  display: flex; align-items: center;
  border-top: 1px solid #f4f4f4;
  background: linear-gradient(90deg, #1a2026, #1f2b31 45%, #1c2126);
  color: #fff;
}
.start { width: 60px; height: 100%; display: flex; align-items: center; justify-content: center; }
.start svg { width: 20px; height: 20px; }
.task-search {
  width: 360px; height: 100%; flex: none;
  background: #f1f1f1;
  display: flex; align-items: center;
  padding-left: 15px;
  color: #222; font-size: 18px;
}
.task-search svg { width: 21px; height: 21px; margin-right: 14px; }
.tb { width: 62px; height: 100%; flex: none; display: flex; align-items: center; justify-content: center; position: relative; }
.tb svg { width: 30px; height: 30px; }
.tb-view { width: 63px; padding-right: 3px; }
.tb-view svg { width: 20px; height: 24px; }
.tb.on::after { content: ""; position: absolute; left: 5px; right: 5px; bottom: 0; height: 3px; background: #76b9ed; }
.tb.active { background: #4a565c; }
.tb.active::after { left: 0; right: 0; }
.tray { margin-left: auto; display: flex; align-items: center; height: 100%; }
.weather { width: 32px; height: 36px; }
.temp { margin-left: 11px; font-size: 17px; }
.cond { margin-left: 10px; font-size: 16.500px; width: 70px; font-family: "DejaVu Sans", sans-serif; white-space: nowrap; }
.tr-ic { width: 18px; height: 18px; margin-left: 12.500px; }
.chevup { margin-left: 27px; }
.clock { display: flex; flex-direction: column; align-items: center; width: 80px; margin-left: 9px; font-size: 14px; line-height: 20px; }
.notif { position: relative; width: 24px; height: 24px; margin: 0 26px 0 24px; }
.notif svg { width: 20px; height: 20px; }
.notif-badge {
  position: absolute; right: -3px; bottom: -7px;
  width: 20px; height: 20px; border-radius: 50%;
  background: #3c4347; border: 1px solid #aaa;
  display: flex; align-items: center; justify-content: center;
  font-size: 12px; font-weight: 700;
}
```
